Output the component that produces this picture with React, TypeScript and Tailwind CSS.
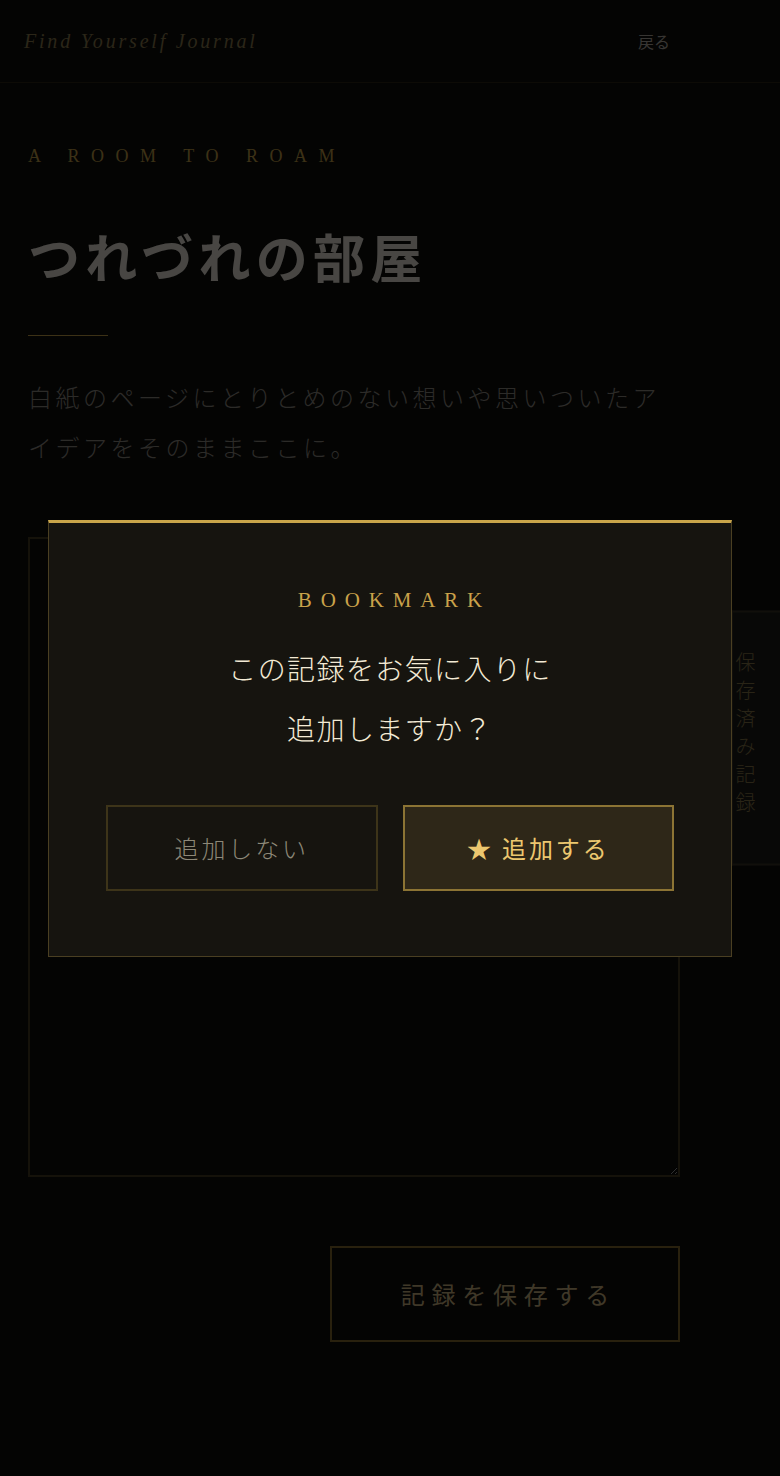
import { useState } from "react";

const serif = "font-['Liberation_Serif','Noto_Sans_CJK_JP',serif]";
const jp = "font-['Noto_Sans_CJK_JP',sans-serif]";

export default function App() {
  const [text, setText] = useState("");
  const [open, setOpen] = useState(true);

  return (
    <div className="min-h-[1476px] bg-[#0e0e0d] text-[#f0ebe0]">
      {/* header */}
      <header className="h-[83px] flex items-center justify-between pl-6 pr-[110px] border-b border-[#2c2714]">
        <span className={`${serif} italic text-[20px] tracking-[0.14em] text-[#8f7f50]`}>Find Yourself Journal</span>
        <a className={`${jp} text-[16px] text-[#b8b2a8]`}>戻る</a>
      </header>

      <main className="pl-7 pr-[100px] pt-[61px] pb-[134px]">
        <p className={`${serif} text-[18px] leading-6 tracking-[0.64em] text-[#c9a54a]`}>A ROOM TO ROAM</p>
        <h1 className={`${jp} mt-[58px] text-[52px] leading-[60px] font-bold tracking-[0.1em] text-[#f0ebe0]`}>
          つれづれの部屋
        </h1>
        <div className="mt-[49px] h-px w-20 bg-[#c9a54a]" />
        <p className={`${jp} mt-9 text-[24px] leading-[50px] tracking-[3.5px] font-light text-[#959088]`}>
          白紙のページにとりとめのない想いや思いついたアイデアをそのままここに。
        </p>

        <textarea
          value={text}
          onChange={(e) => setText(e.target.value)}
          className="mt-[65px] block w-full h-[640px] bg-transparent border-2 border-[#463d22] outline-none p-6"
        />

        <div className="mt-[69px] flex justify-end">
          <button className={`${jp} w-[350px] h-[96px] border-2 border-[#8a7030] text-[24px] tracking-[0.28em] pl-[0.28em] text-[#d4bb85]`}>
            記録を保存する
          </button>
        </div>
      </main>

      {/* saved records tab */}
      <div className="fixed right-0 top-1/2 -translate-y-1/2 w-[49px] h-[255px] bg-[#1c1c1a] border-y-2 border-l-2 border-[#3a3526] flex items-start pl-[1px] py-10">
        <span className={`${jp} block [writing-mode:vertical-rl] text-[20px] leading-[22px] tracking-[8px] font-light text-[#8a7a4a]`}>保存済み記録</span>
      </div>

      {open && (
        <div className="fixed inset-0 bg-black/70 flex items-center justify-center">
          <div className="w-[684px] bg-[#16140f] border border-[#4a3f22] border-t-[3px] border-t-[#c9a54a] px-[57px] pt-[62px] pb-[65px] text-center">
            <p className={`${serif} text-[21px] leading-[30px] tracking-[0.42em] pl-[0.42em] text-[#c9a24a]`}>BOOKMARK</p>
            <h2 className={`${jp} mt-[23px] text-[28px] leading-[60px] tracking-[0.05em] font-light text-[#f3ead5]`}>
              この記録をお気に入りに
              <br />
              追加しますか？
            </h2>
            <div className="mt-[47px] grid grid-cols-2 gap-[25px]">
              <button
                onClick={() => setOpen(false)}
                className={`${jp} h-[86px] border-2 border-[#3d3419] text-[24px] tracking-[0.12em] font-light text-[#8d8878]`}
              >
                追加しない
              </button>
              <button
                onClick={() => setOpen(false)}
                className={`${jp} h-[86px] border-2 border-[#8c7434] bg-[#2e2718] text-[24px] tracking-[0.12em] text-[#ecc76f]`}
              >
                ★ 追加する
              </button>
            </div>
          </div>
        </div>
      )}
    </div>
  );
}
